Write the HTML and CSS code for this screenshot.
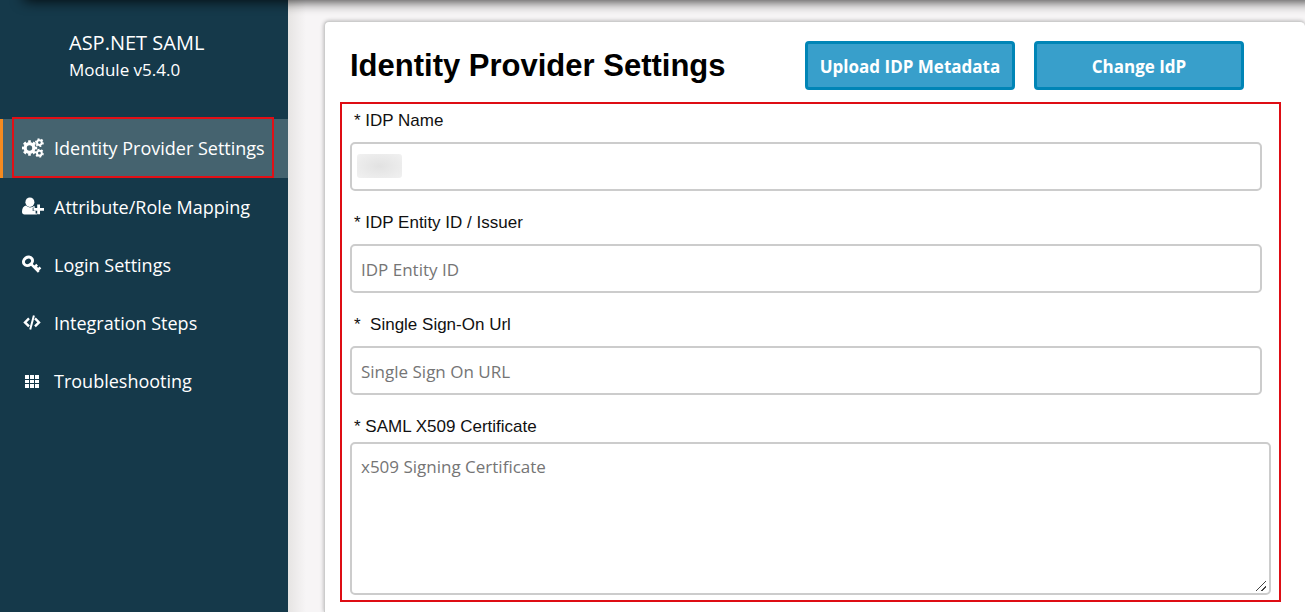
FILE: index.html
```
<!DOCTYPE html>
<html lang="en">
<head>
<meta charset="utf-8">
<meta name="viewport" content="width=device-width, initial-scale=1">
<title>ASP.NET SAML Module</title>
<link rel="stylesheet" href="styles.css">
</head>
<body>
<div class="app">
  <aside class="sidebar">
    <div class="brand">
      <div class="brand-name">ASP.NET SAML</div>
      <div class="brand-version">Module v5.4.0</div>
    </div>
    <nav class="nav">
      <a class="nav-item active" href="#idp">
        <svg class="icon" viewBox="0 0 22 20" fill="none" stroke="#fff">
          <circle cx="7.500" cy="10" r="4.400" stroke-width="3.400"/>
          <circle cx="7.500" cy="10" r="6.500" stroke-width="2.400" pathLength="80" stroke-dasharray="5.500 4.500" stroke-dashoffset="2.750"/>
          <circle cx="17.400" cy="4.600" r="2.400" stroke-width="2"/>
          <circle cx="17.400" cy="4.600" r="3.600" stroke-width="1.700" pathLength="60" stroke-dasharray="5 5"/>
          <circle cx="17.400" cy="15.200" r="2.400" stroke-width="2"/>
          <circle cx="17.400" cy="15.200" r="3.600" stroke-width="1.700" pathLength="60" stroke-dasharray="5 5"/>
        </svg>
        <span>Identity Provider Settings</span>
      </a>
      <a class="nav-item" href="#mapping">
        <svg class="icon" viewBox="0 0 22 20" fill="#fff">
          <ellipse cx="7.900" cy="5.200" rx="4.500" ry="4.800"/>
          <path d="M4 8.600C1.400 9 0 11.500 0 14.800 0 16.600 1 17.600 2.500 17.600H13.500C14.500 17.600 15.200 17.200 15.400 16.400H13.600V13.900H10.700V10.700H13.200L12.200 8.700C9.600 11 6.500 11 4 8.600Z"/>
          <path d="M15.200 7.400H18V10.900H22V13.700H18V17.200H15.200V13.700H11.500V10.900H15.200Z"/>
        </svg>
        <span>Attribute/Role Mapping</span>
      </a>
      <a class="nav-item" href="#login">
        <svg class="icon" viewBox="0 0 22 20" fill="none" stroke="#fff">
          <ellipse cx="6" cy="6.300" rx="4.700" ry="4" stroke-width="3" transform="rotate(-35 6 6.300)"/>
          <path d="M9.200 9.200L16.800 16.800M12.200 12.200L15.200 9.800M15.200 15.200L18.500 12.600" stroke-width="2.600"/>
          <path d="M13.500 11.300L17 14.800" stroke-width="1.500"/>
        </svg>
        <span>Login Settings</span>
      </a>
      <a class="nav-item" href="#integration">
        <svg class="icon" viewBox="0 0 22 20" fill="none" stroke="#fff" stroke-width="2.400">
          <path d="M7 5.400L3 9.400L7 13.400M13 5.400L17 9.400L13 13.400"/>
          <path d="M11.900 2.400L8.200 16.400" stroke-width="2"/>
        </svg>
        <span>Integration Steps</span>
      </a>
      <a class="nav-item" href="#troubleshooting">
        <svg class="icon" viewBox="0 0 22 20" fill="#fff">
          <path d="M3 4h4v4H3zM8 4h4v4H8zM13 4h4v4h-4zM3 9h4v3H3zM8 9h4v3H8zM13 9h4v3h-4zM3 13h4v4H3zM8 13h4v4H8zM13 13h4v4h-4z"/>
        </svg>
        <span>Troubleshooting</span>
      </a>
    </nav>
  </aside>
  <main class="main">
    <section class="card">
      <header class="card-header">
        <h1 class="title">Identity Provider Settings</h1>
        <button class="button" type="button">Upload IDP Metadata</button>
        <button class="button" type="button">Change IdP</button>
      </header>
      <form class="form">
        <div class="field">
          <label class="label" for="idp-name">* IDP Name</label>
          <div class="control">
            <input class="input" id="idp-name" type="text">
            <span class="masked"></span>
          </div>
        </div>
        <div class="field">
          <label class="label" for="entity-id">* IDP Entity ID / Issuer</label>
          <div class="control"><input class="input" id="entity-id" type="text" placeholder="IDP Entity ID"></div>
        </div>
        <div class="field">
          <label class="label" for="sso-url">*&nbsp; Single Sign-On Url</label>
          <div class="control"><input class="input" id="sso-url" type="text" placeholder="Single Sign On URL"></div>
        </div>
        <div class="field">
          <label class="label label-tight" for="certificate">* SAML X509 Certificate</label>
          <textarea class="textarea" id="certificate" placeholder="x509 Signing Certificate"></textarea>
        </div>
      </form>
    </section>
  </main>
</div>
</body>
</html>
```
FILE: styles.css
```
* {
  box-sizing: border-box;
}

body {
  margin: 0;
  font-family: "Open Sans", "Noto Sans", sans-serif;
  overflow: hidden;
}

.app {
  position: relative;
  display: flex;
  min-height: 100vh;
}

/* Shadow cast by the top bar */
.app::before {
  content: "";
  position: absolute;
  top: -10px;
  left: 26px;
  right: -10px;
  height: 8px;
  box-shadow: 0 0 14px 2px #000;
  pointer-events: none;
  z-index: 1;
}

.sidebar {
  flex: 0 0 288px;
  background: #15394a;
  color: #fff;
}

.brand {
  padding: 28px 0 36px 69px;
}

.brand-name {
  font-size: 20px;
  line-height: 29px;
}

.brand-version {
  font-size: 17px;
  line-height: 26px;
}

.nav-item {
  position: relative;
  display: flex;
  align-items: center;
  gap: 10px;
  height: 58px;
  padding-left: 22px;
  color: #fff;
  font-size: 18px;
  text-decoration: none;
  white-space: nowrap;
}

.nav-item.active {
  height: 59px;
  padding: 0 0 2px 19px;
  border-left: 3px solid #f58a1f;
  background: #45636f;
}

.nav-item.active::after {
  content: "";
  position: absolute;
  inset: -2px 14px 0 9px;
  border: 2px solid #e20f16;
}

.icon {
  flex: none;
  width: 22px;
  height: 20px;
}

.main {
  flex: 1;
  min-width: 0;
  padding: 21px 0 0 36px;
  background: linear-gradient(90deg, #e6e4e3, #f7f5f6 18px);
}

.card {
  min-height: 100%;
  padding: 19px 24px 10px 15px;
  border: 1px solid #ccc;
  border-right: 0;
  border-bottom: 0;
  border-radius: 5px 5px 0 0;
  background: #fff;
  box-shadow: 0 0 4px rgba(0, 0, 0, 0.3);
}

.card-header {
  display: flex;
  align-items: center;
  gap: 19px;
  padding: 0 37px 0 10px;
  margin-bottom: 12px;
}

.title {
  flex: 1;
  margin: 0;
  color: #000;
  font: bold 31px/48px "Liberation Sans", Arial, sans-serif;
  white-space: nowrap;
}

.button {
  flex: 0 0 210px;
  height: 49px;
  padding: 2px 0 0;
  border: 3px solid #0085b6;
  border-radius: 4px;
  background: #389fcb;
  color: #fff;
  font: bold 17px "Open Sans", "Noto Sans", sans-serif;
  white-space: nowrap;
}

.form {
  display: flex;
  flex-direction: column;
  gap: 17px;
  padding: 2px 8px 5px;
  border: 2px solid #de0d14;
}

.label {
  display: block;
  margin-bottom: 6px;
  padding-left: 4px;
  color: #111;
  font: 17px/30px "Liberation Sans", Arial, sans-serif;
}

.label-tight {
  margin-bottom: 0;
}

.control {
  position: relative;
  padding-right: 9px;
}

.input,
.textarea {
  display: block;
  width: 100%;
  border: 2px solid #ccc;
  border-radius: 5px;
  background: #fff;
  color: #333;
  font: 17px/24px "Open Sans", "Noto Sans", sans-serif;
}

.input {
  height: 49px;
  padding: 2px 9px 0;
}

.textarea {
  height: 153px;
  padding: 11px 9px;
  resize: both;
}

.textarea::-webkit-resizer {
  background: linear-gradient(135deg, transparent 45%, #444 46% 54%, transparent 55% 73%, #444 74% 82%, transparent 83%) 2px 3px / 10px 10px no-repeat;
}

.input::placeholder,
.textarea::placeholder {
  color: #757575;
}

.masked {
  position: absolute;
  top: 12px;
  left: 7px;
  width: 45px;
  height: 24px;
  border-radius: 3px;
  background: radial-gradient(#e2e2e2, #f1f1f1);
}
```
